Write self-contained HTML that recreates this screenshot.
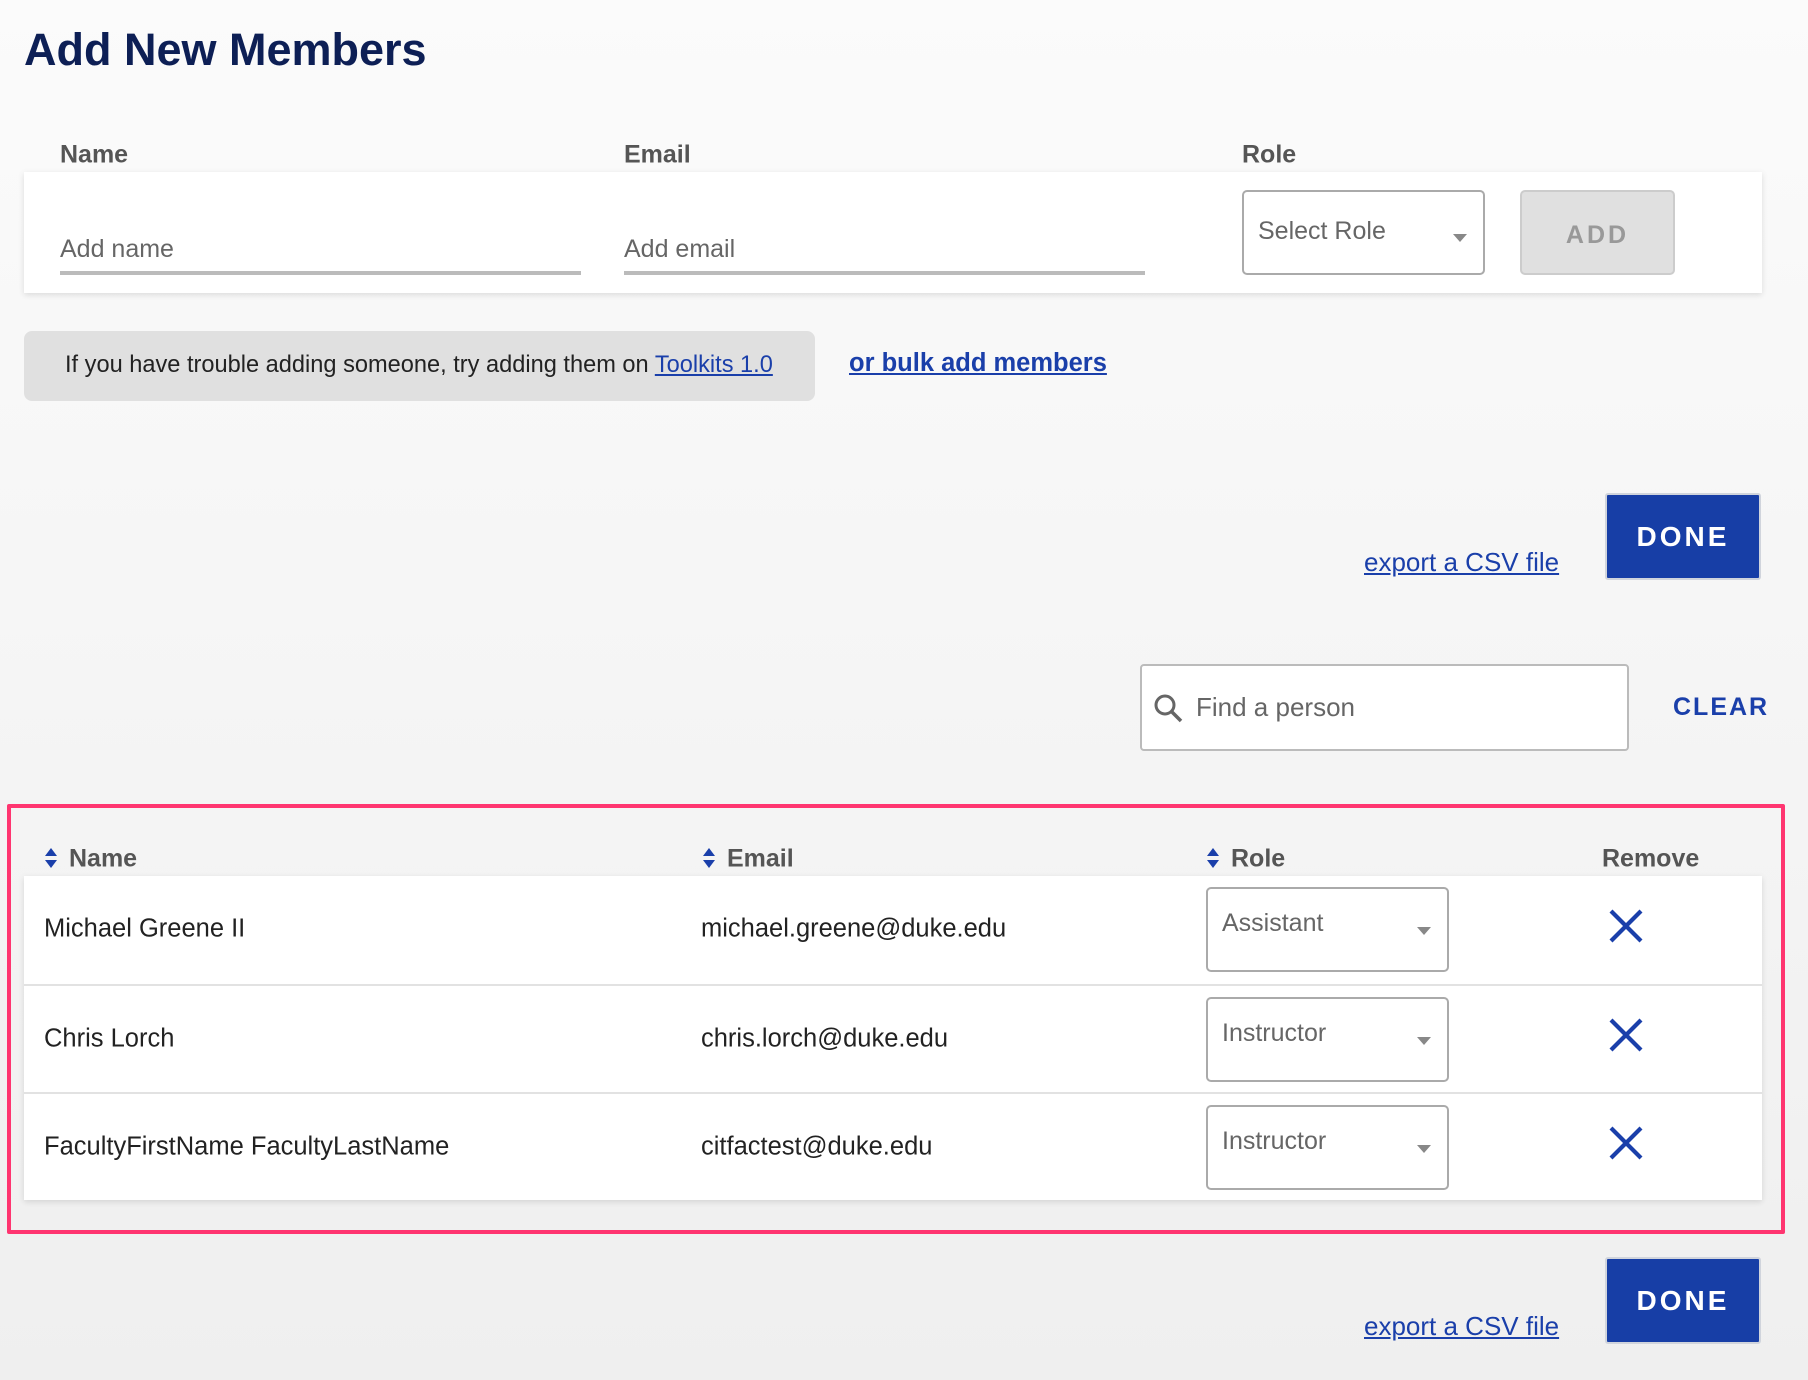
<!DOCTYPE html>
<html><head><meta charset="utf-8"><style>
*{box-sizing:border-box;margin:0;padding:0}
body{width:1808px;height:1380px;overflow:hidden;position:relative;font-family:"Liberation Sans",sans-serif;background:linear-gradient(#fbfbfb,#efefef)}
.a{position:absolute;white-space:nowrap}
.lbl{font-size:25px;color:#555;font-weight:bold;transform:translateY(-50%)}
.ph{font-size:25px;color:#666}
.card{position:absolute;background:#fff;box-shadow:0 2px 6px rgba(0,0,0,.12)}
.sel{position:absolute;background:#fff;border:2px solid #aaa;border-radius:5px}
.sel span{position:absolute;left:14px;top:20px;font-size:25px;color:#666}
.sel i{position:absolute;right:16px;width:0;height:0;border-left:7px solid transparent;border-right:7px solid transparent;border-top:8px solid #888}
.btn{position:absolute;background:#173ea6;border:2px solid #d0d4dc;border-radius:3px;color:#fff;font-weight:bold;font-size:28px;letter-spacing:3px;display:flex;align-items:center;justify-content:center}
.lnk{color:#1a3faa;text-decoration:underline;font-size:26px}
.cell{font-size:25px;color:#222;transform:translateY(-50%)}
.sort{position:absolute;width:14px;height:22px}
</style></head><body>
<div class="a" style="left:24px;top:24px;font-size:45px;font-weight:bold;color:#0d1f55">Add New Members</div>

<div class="a lbl" style="left:60px;top:155px">Name</div>
<div class="a lbl" style="left:624px;top:155px">Email</div>
<div class="a lbl" style="left:1242px;top:155px">Role</div>

<div class="card" style="left:24px;top:172px;width:1738px;height:121px"></div>
<div class="a ph" style="left:60px;top:235px">Add name</div>
<div class="a" style="left:60px;top:271px;width:521px;height:4px;background:#bbb"></div>
<div class="a ph" style="left:624px;top:235px">Add email</div>
<div class="a" style="left:624px;top:271px;width:521px;height:4px;background:#bbb"></div>
<div class="sel" style="left:1242px;top:190px;width:243px;height:85px"><span style="top:25px">Select Role</span><i style="top:42px"></i></div>
<div class="a" style="left:1520px;top:190px;width:155px;height:85px;background:#e0e0e0;border:2px solid #ccc;border-radius:5px;color:#999;font-weight:bold;font-size:25px;letter-spacing:3px;display:flex;align-items:center;justify-content:center;padding-top:6px">ADD</div>

<div class="a" style="left:24px;top:331px;width:791px;height:70px;background:#e0e0e0;border-radius:8px"></div>
<div class="a" style="left:65px;top:352px;font-size:23.6px;color:#222">If you have trouble adding someone, try adding them on <span class="lnk" style="font-size:23.6px">Toolkits 1.0</span></div>
<div class="a lnk" style="left:849px;top:349px;font-weight:bold;font-size:25.5px">or bulk add members</div>

<div class="a lnk" style="left:1364px;top:547px">export a CSV file</div>
<div class="btn" style="left:1605px;top:493px;width:156px;height:87px">DONE</div>

<div class="a" style="left:1140px;top:664px;width:489px;height:87px;background:#fff;border:2px solid #bbb;border-radius:4px"></div>
<svg class="a" style="left:1152px;top:692px" width="32" height="32" viewBox="0 0 32 32"><circle cx="13" cy="13" r="9" fill="none" stroke="#666" stroke-width="3"/><line x1="19.5" y1="19.5" x2="29" y2="29" stroke="#666" stroke-width="3.5"/></svg>
<div class="a" style="left:1196px;top:692px;font-size:26px;color:#666">Find a person</div>
<div class="a" style="left:1673px;top:693px;font-size:25px;font-weight:bold;color:#1a3faa;letter-spacing:2px">CLEAR</div>

<div class="a" style="left:7px;top:804px;width:1778px;height:430px;border:4px solid #ff3570;border-radius:2px"></div>

<svg class="sort" style="left:44px;top:847px" viewBox="0 0 14 22"><path d="M7 1L13 9H1Z M7 21L13 13H1Z" fill="#1a3faa"/></svg>
<div class="a lbl" style="left:69px;top:859px">Name</div>
<svg class="sort" style="left:702px;top:847px" viewBox="0 0 14 22"><path d="M7 1L13 9H1Z M7 21L13 13H1Z" fill="#1a3faa"/></svg>
<div class="a lbl" style="left:727px;top:859px">Email</div>
<svg class="sort" style="left:1206px;top:847px" viewBox="0 0 14 22"><path d="M7 1L13 9H1Z M7 21L13 13H1Z" fill="#1a3faa"/></svg>
<div class="a lbl" style="left:1231px;top:859px">Role</div>
<div class="a lbl" style="left:1602px;top:859px">Remove</div>

<div class="card" style="left:24px;top:876px;width:1738px;height:324px"></div>
<div class="a" style="left:24px;top:984px;width:1738px;height:2px;background:#e2e2e2"></div>
<div class="a" style="left:24px;top:1092px;width:1738px;height:2px;background:#e2e2e2"></div>

<div class="a cell" style="left:44px;top:929px;font-size:25.5px">Michael Greene II</div>
<div class="a cell" style="left:701px;top:929px;font-size:25.5px">michael.greene@duke.edu</div>
<div class="sel" style="left:1206px;top:887px;width:243px;height:85px"><span>Assistant</span><i style="top:38px"></i></div>

<div class="a cell" style="left:44px;top:1039px;font-size:25.5px">Chris Lorch</div>
<div class="a cell" style="left:701px;top:1039px;font-size:25.5px">chris.lorch@duke.edu</div>
<div class="sel" style="left:1206px;top:997px;width:243px;height:85px"><span>Instructor</span><i style="top:38px"></i></div>

<div class="a cell" style="left:44px;top:1147px;font-size:25.5px">FacultyFirstName FacultyLastName</div>
<div class="a cell" style="left:701px;top:1147px;font-size:25.5px">citfactest@duke.edu</div>
<div class="sel" style="left:1206px;top:1105px;width:243px;height:85px"><span>Instructor</span><i style="top:38px"></i></div>

<svg class="a" style="left:1609px;top:909px" width="34" height="34" viewBox="0 0 34 34"><path d="M2 2L32 32M32 2L2 32" stroke="#1a3faa" stroke-width="4.2"/></svg>
<svg class="a" style="left:1609px;top:1018px" width="34" height="34" viewBox="0 0 34 34"><path d="M2 2L32 32M32 2L2 32" stroke="#1a3faa" stroke-width="4.2"/></svg>
<svg class="a" style="left:1609px;top:1126px" width="34" height="34" viewBox="0 0 34 34"><path d="M2 2L32 32M32 2L2 32" stroke="#1a3faa" stroke-width="4.2"/></svg>

<div class="a lnk" style="left:1364px;top:1311px">export a CSV file</div>
<div class="btn" style="left:1605px;top:1257px;width:156px;height:87px">DONE</div>
</body></html>
